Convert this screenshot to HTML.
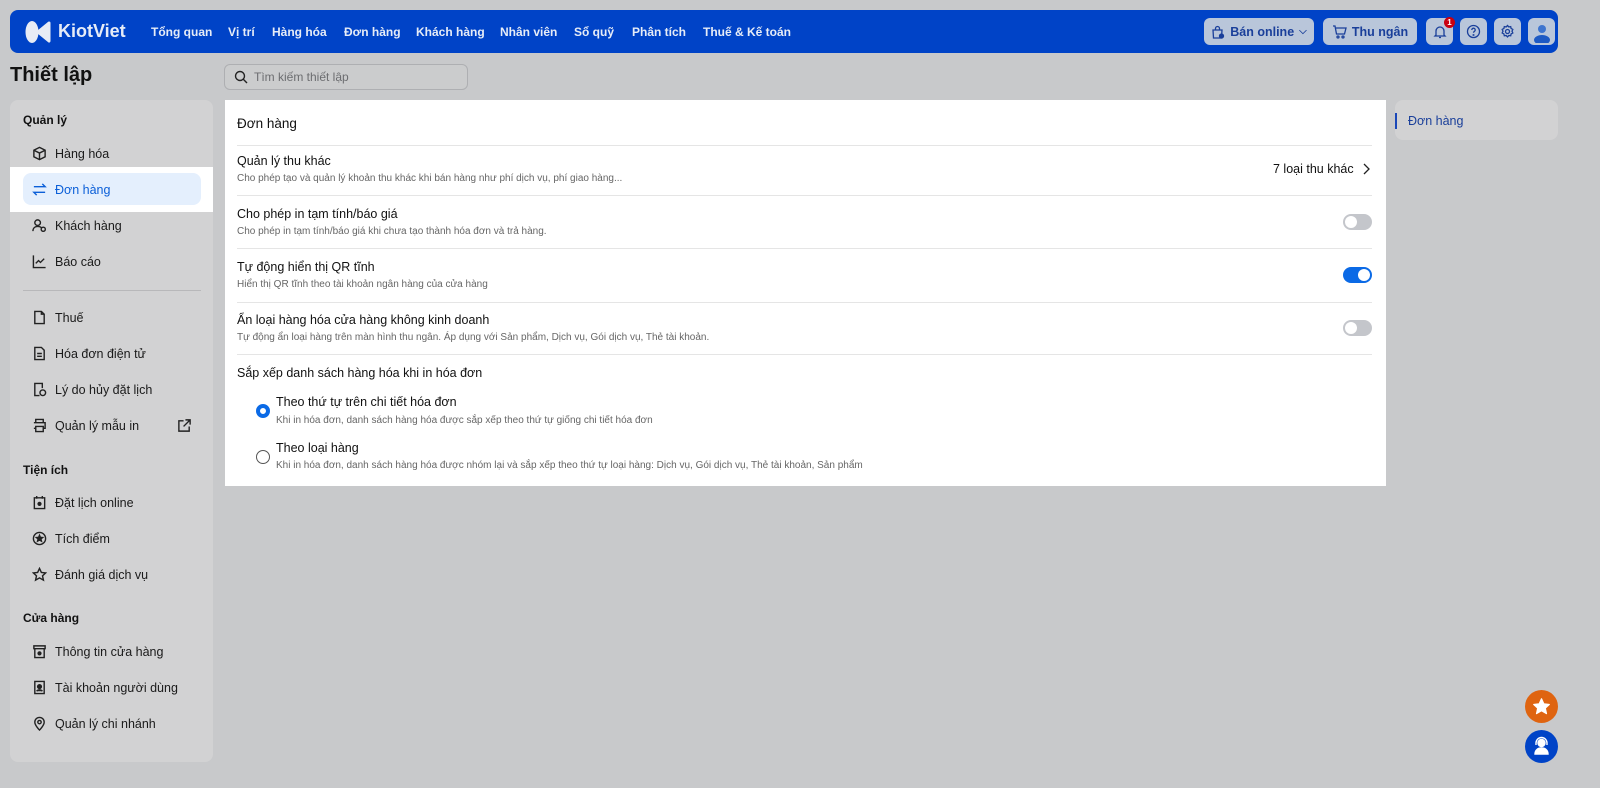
<!DOCTYPE html>
<html><head><meta charset="utf-8"><style>
*{box-sizing:border-box;margin:0;padding:0}
body{width:1600px;height:788px;background:#c8c9cb;font-family:"Liberation Sans","Noto Sans CJK JP",sans-serif;position:relative;overflow:hidden;color:#111}
.abs{position:absolute}
.nav{left:10px;top:10px;width:1548px;height:43px;background:#0043c7;border-radius:8px}
.nav .m{position:absolute;top:15px;color:#e6ecf7;font-size:12px;font-weight:bold;white-space:nowrap}
.nb{position:absolute;top:8px;height:27px;background:#b9c6da;border-radius:6px;color:#1a3f9a;font-size:12.5px;font-weight:bold;display:flex;align-items:center;justify-content:center;gap:5px}
.side{left:10px;top:100px;width:203px;height:662px;background:#d2d2d3;border-radius:8px}
.sh{position:absolute;left:23px;font-size:12px;font-weight:bold;color:#111}
.si{position:absolute;left:32px;font-size:12.5px;color:#1a1a1a;display:flex;align-items:center;gap:8px}
.si svg{width:15px;height:15px;fill:none;stroke:#222;stroke-width:1.5}
.card{left:225px;top:100px;width:1161px;height:386px;background:#fff}
.t{position:absolute;left:12px;font-size:12.5px;color:#111}
.d{position:absolute;left:12px;font-size:10px;color:#666}
.sep{position:absolute;left:12px;right:14px;height:1px;background:#e5e5e5}
.tg{position:absolute;left:1118px;width:29px;height:16px;border-radius:8px;background:#c4c6cb}
.tg:after{content:"";position:absolute;top:2px;left:2px;width:12px;height:12px;border-radius:50%;background:#fff}
.tg.on{background:#0b6ae6}.tg.on:after{left:15px}
</style></head><body>
<div class="abs nav">
 <svg style="position:absolute;left:14px;top:8px" width="28" height="28" viewBox="0 0 28 28"><ellipse cx="8" cy="14" rx="6.5" ry="11" fill="#e8ecf5"/><path d="M25 5 L14 14 L25 23 Z" fill="#e8ecf5" stroke="#e8ecf5" stroke-width="3" stroke-linejoin="round"/></svg>
 <div style="position:absolute;left:48px;top:11px;color:#e6ecf7;font-size:18px;font-weight:bold">KiotViet</div>
 <div class="m" style="left:141px">Tổng quan</div>
 <div class="m" style="left:218px">Vị trí</div>
 <div class="m" style="left:262px">Hàng hóa</div>
 <div class="m" style="left:334px">Đơn hàng</div>
 <div class="m" style="left:406px">Khách hàng</div>
 <div class="m" style="left:490px">Nhân viên</div>
 <div class="m" style="left:564px">Sổ quỹ</div>
 <div class="m" style="left:622px">Phân tích</div>
 <div class="m" style="left:693px">Thuế &amp; Kế toán</div>
 <div class="nb" style="left:1194px;width:110px"><svg width="14" height="14" viewBox="0 0 14 14" fill="none" stroke="#1a3f9a" stroke-width="1.3"><path d="M2 5h9l-.5 8h-8z M4.5 5V3.5a2 2 0 014 0V5"/><circle cx="10.5" cy="11" r="2" fill="#1a3f9a"/></svg>Bán online <span style="font-size:10px">⌵</span></div>
 <div class="nb" style="left:1313px;width:94px"><svg width="15" height="14" viewBox="0 0 15 14" fill="none" stroke="#1a3f9a" stroke-width="1.3"><path d="M1 1h2l1.5 8h8l1.5-6H4"/><circle cx="6" cy="12" r="1"/><circle cx="11" cy="12" r="1"/></svg>Thu ngân</div>
 <div class="nb" style="left:1416px;width:27px"><svg width="14" height="14" viewBox="0 0 14 14" fill="none" stroke="#1a3f9a" stroke-width="1.3"><path d="M3 10V6a4 4 0 018 0v4l1 1H2z M6 12.5h2"/></svg><div style="position:absolute;left:18px;top:-1px;width:11px;height:11px;border-radius:50%;background:#c90010;color:#fff;font-size:8px;text-align:center;line-height:11px">1</div></div>
 <div class="nb" style="left:1450px;width:27px"><svg width="15" height="15" viewBox="0 0 15 15" fill="none" stroke="#1a3f9a" stroke-width="1.3"><circle cx="7.5" cy="7.5" r="6"/><path d="M5.8 6a1.7 1.7 0 113 1c-.8.5-1.3.8-1.3 1.7"/><circle cx="7.5" cy="11" r=".4"/></svg></div>
 <div class="nb" style="left:1484px;width:27px"><svg width="15" height="15" viewBox="0 0 15 15" fill="none" stroke="#1a3f9a" stroke-width="1.3"><circle cx="7.5" cy="7.5" r="2"/><path d="M7.5 1.5l1.3 1.4 1.9-.3.4 1.9 1.7.9-.8 1.8.8 1.8-1.7.9-.4 1.9-1.9-.3-1.3 1.4-1.3-1.4-1.9.3-.4-1.9-1.7-.9.8-1.8-.8-1.8 1.7-.9.4-1.9 1.9.3z"/></svg></div>
 <div class="nb" style="left:1518px;width:27px;overflow:hidden"><svg width="20" height="22" viewBox="0 0 20 22"><circle cx="10" cy="8" r="4" fill="#3d74cf"/><ellipse cx="10" cy="19" rx="8" ry="5" fill="#1e5ac4"/></svg></div>
</div>
<div class="abs" style="left:10px;top:64px;font-size:20px;font-weight:bold">Thiết lập</div>
<div class="abs" style="left:224px;top:64px;width:244px;height:26px;border:1px solid #aeafb2;border-radius:6px;background:#cbcccd;display:flex;align-items:center;padding-left:9px;gap:6px;font-size:12px;color:#6c6d70"><svg width="14" height="14" viewBox="0 0 14 14" fill="none" stroke="#222" stroke-width="1.4"><circle cx="6" cy="6" r="4.5"/><path d="M9.3 9.3L13 13"/></svg>Tìm kiếm thiết lập</div>
<div class="abs side"></div>
<div class="abs" style="left:10px;top:167px;width:203px;height:45px;background:#fff"></div>
<div class="abs" style="left:23px;top:173px;width:178px;height:32px;background:#e4effd;border-radius:8px"></div>
<div class="sh" style="top:113px">Quản lý</div>
<div class="si" style="top:146px"><svg viewBox="0 0 16 16"><path d="M8 1.5l6 3v7l-6 3-6-3v-7z M2 4.5l6 3 6-3 M8 7.5v7"/></svg>Hàng hóa</div>
<div class="si" style="top:182px;color:#0b5fd8"><svg viewBox="0 0 16 16" style="stroke:#0b5fd8"><path d="M2 5h12l-3-3 M14 11H2l3 3"/></svg>Đơn hàng</div>
<div class="si" style="top:218px"><svg viewBox="0 0 16 16"><circle cx="6" cy="5" r="3"/><path d="M1 14c0-3 2-5 5-5s4 1 4.5 2"/><circle cx="12" cy="12" r="2.2"/></svg>Khách hàng</div>
<div class="si" style="top:254px"><svg viewBox="0 0 16 16"><path d="M1.5 1.5v13h13 M4 10l3-3 2 2 4-4"/></svg>Báo cáo</div>
<div class="abs" style="left:23px;top:290px;width:178px;height:1px;background:#b8b8ba"></div>
<div class="si" style="top:310px"><svg viewBox="0 0 16 16"><path d="M10 1.5H3v13h10V4.5z M10 1.5v3h3"/></svg>Thuế</div>
<div class="si" style="top:346px"><svg viewBox="0 0 16 16"><path d="M3 1.5h7l3 3v10H3z M5.5 8h5 M5.5 11h5"/></svg>Hóa đơn điện tử</div>
<div class="si" style="top:382px"><svg viewBox="0 0 16 16"><path d="M8 14.5H3v-13h8v5"/><circle cx="11.5" cy="11.5" r="3"/></svg>Lý do hủy đặt lịch</div>
<div class="si" style="top:418px"><svg viewBox="0 0 16 16"><path d="M4 5V1.5h8V5 M2 5h12v6h-2 M4 11H2 M4 9h8v5.5H4z"/></svg>Quản lý mẫu in</div>
<svg class="abs" style="left:177px;top:418px" width="15" height="15" viewBox="0 0 16 16" fill="none" stroke="#222" stroke-width="1.5"><path d="M13 9v5H2V3h5 M9 2h5v5 M14 2L7 9"/></svg>
<div class="sh" style="top:463px">Tiện ích</div>
<div class="si" style="top:495px"><svg viewBox="0 0 16 16"><path d="M2.5 3h11v11.5h-11z M5 1v3 M11 1v3"/><circle cx="8" cy="9.5" r="1.5" fill="#222"/></svg>Đặt lịch online</div>
<div class="si" style="top:531px"><svg viewBox="0 0 16 16"><circle cx="8" cy="8" r="6.5"/><path d="M8 4.5l1 2.3 2.3.2-1.8 1.5.6 2.3L8 9.6 5.9 10.8l.6-2.3L4.7 7l2.3-.2z" fill="#222"/></svg>Tích điểm</div>
<div class="si" style="top:567px"><svg viewBox="0 0 16 16"><path d="M8 1.5l2 4.3 4.6.5-3.4 3.1 1 4.6L8 11.6 3.8 14l1-4.6L1.4 6.3 6 5.8z"/></svg>Đánh giá dịch vụ</div>
<div class="sh" style="top:611px">Cửa hàng</div>
<div class="si" style="top:644px"><svg viewBox="0 0 16 16"><path d="M2 2h12v3H2z M3 5v9.5h10V5"/><circle cx="8" cy="10" r="1.5" fill="#222"/></svg>Thông tin cửa hàng</div>
<div class="si" style="top:680px"><svg viewBox="0 0 16 16"><path d="M3 1.5h10v13H3z"/><circle cx="8" cy="7" r="2" fill="#222"/><path d="M5 12c1-2 5-2 6 0" fill="#222"/></svg>Tài khoản người dùng</div>
<div class="si" style="top:716px"><svg viewBox="0 0 16 16"><path d="M8 15s5-5 5-8.5a5 5 0 00-10 0C3 10 8 15 8 15z"/><circle cx="8" cy="6.5" r="1.8"/></svg>Quản lý chi nhánh</div>

<div class="abs card">
 <div class="t" style="top:16px;font-size:13.5px">Đơn hàng</div>
 <div class="sep" style="top:45px"></div>
 <div class="t" style="top:54px">Quản lý thu khác</div>
 <div class="d" style="top:73px">Cho phép tạo và quản lý khoản thu khác khi bán hàng như phí dịch vụ, phí giao hàng...</div>
 <div class="abs" style="left:1048px;top:62px;font-size:12.5px">7 loại thu khác</div>
 <svg class="abs" style="left:1136px;top:63px" width="10" height="12" viewBox="0 0 10 12" fill="none" stroke="#222" stroke-width="1.3"><path d="M3 1l5 5-5 5"/></svg>
 <div class="sep" style="top:95px"></div>
 <div class="t" style="top:107px">Cho phép in tạm tính/báo giá</div>
 <div class="d" style="top:126px">Cho phép in tạm tính/báo giá khi chưa tạo thành hóa đơn và trả hàng.</div>
 <div class="tg" style="top:114px"></div>
 <div class="sep" style="top:148px"></div>
 <div class="t" style="top:160px">Tự động hiển thị QR tĩnh</div>
 <div class="d" style="top:179px">Hiển thị QR tĩnh theo tài khoản ngân hàng của cửa hàng</div>
 <div class="tg on" style="top:167px"></div>
 <div class="sep" style="top:202px"></div>
 <div class="t" style="top:213px">Ẩn loại hàng hóa cửa hàng không kinh doanh</div>
 <div class="d" style="top:232px">Tự động ẩn loại hàng trên màn hình thu ngân. Áp dụng với Sản phẩm, Dịch vụ, Gói dịch vụ, Thẻ tài khoản.</div>
 <div class="tg" style="top:220px"></div>
 <div class="sep" style="top:254px"></div>
 <div class="t" style="top:266px">Sắp xếp danh sách hàng hóa khi in hóa đơn</div>
 <div class="abs" style="left:31px;top:304px;width:14px;height:14px;border-radius:50%;border:4px solid #0b6ae6"></div>
 <div class="t" style="left:51px;top:295px">Theo thứ tự trên chi tiết hóa đơn</div>
 <div class="d" style="left:51px;top:315px">Khi in hóa đơn, danh sách hàng hóa được sắp xếp theo thứ tự giống chi tiết hóa đơn</div>
 <div class="abs" style="left:31px;top:350px;width:14px;height:14px;border-radius:50%;border:1px solid #555"></div>
 <div class="t" style="left:51px;top:341px">Theo loại hàng</div>
 <div class="d" style="left:51px;top:360px">Khi in hóa đơn, danh sách hàng hóa được nhóm lại và sắp xếp theo thứ tự loại hàng: Dịch vụ, Gói dịch vụ, Thẻ tài khoản, Sản phẩm</div>
</div>
<div class="abs" style="left:1395px;top:100px;width:163px;height:40px;background:#d2d2d3;border-radius:8px"></div>
<div class="abs" style="left:1395px;top:113px;width:2px;height:16px;background:#1a47b8"></div>
<div class="abs" style="left:1408px;top:114px;font-size:12.5px;color:#1a3f9a">Đơn hàng</div>
<div class="abs" style="left:1525px;top:690px;width:33px;height:33px;border-radius:50%;background:#df6410"></div>
<svg class="abs" style="left:1532px;top:697px" width="19" height="19" viewBox="0 0 16 16"><path d="M8 1.5l2 4.3 4.6.5-3.4 3.1 1 4.6L8 11.6 3.8 14l1-4.6L1.4 6.3 6 5.8z" fill="#fff" stroke="#fff" stroke-linejoin="round"/></svg>
<div class="abs" style="left:1525px;top:730px;width:33px;height:33px;border-radius:50%;background:#0043c7"></div>
<svg class="abs" style="left:1532px;top:736px" width="19" height="20" viewBox="0 0 19 20" fill="none" stroke="#fff" stroke-width="1.4"><circle cx="9.5" cy="7" r="3.5" fill="#fff"/><path d="M4 9V7a5.5 5.5 0 0111 0v2"/><path d="M3 18c0-4 3-6 6.5-6s6.5 2 6.5 6z" fill="#fff"/></svg>
</body></html>
